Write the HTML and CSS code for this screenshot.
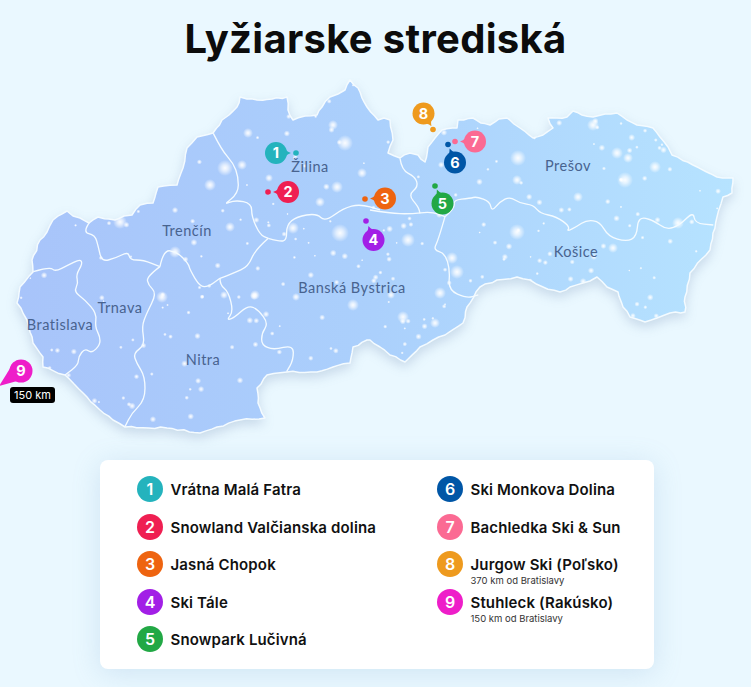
FILE: index.html
```html
<!DOCTYPE html>
<html lang="sk">
<head>
    <meta charset="UTF-8">
    <meta name="viewport" content="width=device-width, initial-scale=1.0">
    <title>Lyžiarske strediská</title>
    <link rel="stylesheet" href="styles.css">
</head>
<body>
    <h1 class="title">Lyžiarske strediská</h1>

    <svg class="map" viewBox="0 78 751 382" width="751" height="382">
        <defs>
            <linearGradient id="land" x1="0" x2="1" y1="0" y2="0">
                <stop offset="0" stop-color="#a8c4fa"/>
                <stop offset="0.5" stop-color="#abd0fc"/>
                <stop offset="1" stop-color="#b6e3ff"/>
            </linearGradient>
            <radialGradient id="speck">
                <stop offset="0" stop-color="#fff" stop-opacity="0.95"/>
                <stop offset="0.4" stop-color="#fff" stop-opacity="0.65"/>
                <stop offset="1" stop-color="#fff" stop-opacity="0"/>
            </radialGradient>
            <path id="outline" d="M17 303 L20 287 L33 272 L32 260 L40 240 L47 232 L53 220 L67 211 L73 216 L80 218 L89 223 L98 217 L115 220 L124 216 L132 215 L140 205 L153 203 L158 187 L177 185 L183 168 L187 148 L197 137 L213 133 L222 120 L229 115 L237 107 L240 97 L247 99 L257 100 L272 99 L287 97 L288 110 L293 120 L305 116 L317 115 L322 107 L330 97 L338 94 L345 90 L350 80 L354 85 L358 88 L362 98 L367 107 L378 120 L384 118 L390 120 L393 140 L388 153 L400 158 L410 153 L418 155 L425 162 L428 147 L435 138 L442 130 L457 128 L458 120 L473 118 L481 123 L490 125 L499 119 L507 118 L514 124 L520 128 L533 138 L543 135 L553 128 L548 118 L557 118 L567 117 L573 111 L582 115 L593 117 L605 114 L617 113 L627 120 L637 125 L653 128 L660 137 L668 147 L672 155 L693 165 L717 177 L733 178 L732 193 L723 197 L717 217 L713 233 L710 250 L690 273 L685 297 L685 312 L670 313 L657 318 L645 322 L630 317 L623 307 L618 292 L607 287 L597 277 L590 281 L583 283 L570 287 L560 292 L543 287 L530 280 L517 277 L497 280 L480 287 L467 307 L463 323 L445 335 L433 340 L420 347 L405 362 L390 355 L380 347 L370 340 L367 340 L353 347 L350 363 L333 367 L317 372 L287 372 L267 375 L257 388 L258 403 L265 418 L240 420 L217 427 L200 433 L167 428 L125 427 L113 420 L100 410 L87 397 L65 375 L43 367 L43 357 L33 343 L27 320 Z"/>
            <clipPath id="land-clip"><use href="#outline"/></clipPath>
            <path id="tail" d="M5 -9 Q9 -2 15 0 Q9 2 5 9 Z"/>
        </defs>

        <use href="#outline" class="land"/>
        <g id="specks" clip-path="url(#land-clip)"></g>
        <use href="#outline" class="edge"/>

        <!-- regions, west part traced at 3x -->
        <g class="border" transform="translate(0 70) scale(0.3333)">
            <path d="M100 605 L150 590 L165 605 L205 585 L240 568 L248 580 L228 615 L235 640 L222 665 L255 690 L290 730 L285 770 L300 800 L300 825 L275 850 L255 835 L235 860 L235 885 L195 915"/>
            <path d="M268 458 L248 487 L285 495 L295 530 L305 575 L345 565 L385 545 L390 570 L430 570 L480 590"/>
            <path d="M480 590 L440 620 L445 645 L470 670 L440 730 L425 770 L435 825 L400 850 L410 880 L435 920 L435 990 L395 1030 L375 1070"/>
            <path d="M480 590 L490 540 L530 545 L565 580 L570 600 L600 650 L625 650 L660 625"/>
            <path d="M640 190 L665 240 L700 280 L715 320 L715 370 L670 405 L705 390 L755 400 L755 440 L780 495 L805 505"/>
            <path d="M805 505 L765 540 L745 590 L700 610 L660 625"/>
            <path d="M660 625 L660 645 L685 665 L700 725 L680 750 L700 745 L745 705 L775 720 L805 760 L785 790 L785 825 L820 840 L880 825 L880 870 L860 905"/>
            <path d="M805 505 L840 515 L860 510 L860 465 L890 440 L950 430 L975 455 L1030 415 L1080 402 L1140 420"/>
        </g>
        <g class="border" transform="translate(370 70) scale(0.3333)">
            <path d="M0 420 L60 430 L120 432 L185 425 L225 440"/>
            <path d="M90 265 L95 300 L135 320 L145 350 L115 375 L145 410 L150 430"/>
            <path d="M225 440 L205 510 L190 540 L225 550 L240 600 L235 660 L290 685 L325 675"/>
            <path d="M225 440 L255 415 L250 390 L300 385 L320 380 L360 395 L365 425 L390 395 L420 380 L450 400 L490 405 L510 430 L560 440 L600 470 L590 485 L620 470 L650 450 L690 455 L715 500 L770 515 L800 500 L805 440 L850 450 L890 480 L930 465 L970 425 L975 460 L1030 465"/>
        </g>

        <g class="labels">
            <text x="310" y="172">Žilina</text>
            <text x="187" y="236">Trenčín</text>
            <text x="60" y="330">Bratislava</text>
            <text x="120" y="313">Trnava</text>
            <text x="203" y="365">Nitra</text>
            <text x="352" y="293">Banská Bystrica</text>
            <text x="568" y="171">Prešov</text>
            <text x="576" y="257">Košice</text>
        </g>

        <g class="pin pin-1">
            <circle cx="296" cy="153" r="2.8"/>
            <use href="#tail" transform="translate(276 153)"/>
            <circle cx="276" cy="153" r="11"/>
            <text x="276" y="158">1</text>
        </g>
        <g class="pin pin-2">
            <circle cx="268" cy="192" r="2.8"/>
            <use href="#tail" transform="translate(288 192) rotate(180)"/>
            <circle cx="288" cy="192" r="11"/>
            <text x="288" y="197">2</text>
        </g>
        <g class="pin pin-3">
            <circle cx="365" cy="199" r="2.8"/>
            <use href="#tail" transform="translate(385 198.5) rotate(180)"/>
            <circle cx="385" cy="198.5" r="11"/>
            <text x="385" y="203.5">3</text>
        </g>
        <g class="pin pin-4">
            <circle cx="366" cy="221" r="2.8"/>
            <use href="#tail" transform="translate(373.5 240) rotate(-110)"/>
            <circle cx="373.5" cy="240" r="11"/>
            <text x="373.5" y="245">4</text>
        </g>
        <g class="pin pin-5">
            <circle cx="435" cy="186" r="2.8"/>
            <use href="#tail" transform="translate(442.5 203.5) rotate(-112)"/>
            <circle cx="442.5" cy="203.5" r="11"/>
            <text x="442.5" y="208.5">5</text>
        </g>
        <g class="pin pin-6">
            <circle cx="448" cy="144.5" r="2.8"/>
            <use href="#tail" transform="translate(455 162.5) rotate(-111)"/>
            <circle cx="455" cy="162.5" r="11"/>
            <text x="455" y="167.5">6</text>
        </g>
        <g class="pin pin-7">
            <circle cx="455" cy="141.5" r="2.8"/>
            <use href="#tail" transform="translate(475 141.5) rotate(180)"/>
            <circle cx="475" cy="141.5" r="11"/>
            <text x="475" y="146.5">7</text>
        </g>
        <g class="pin pin-8">
            <circle cx="433" cy="129.5" r="2.8"/>
            <use href="#tail" transform="translate(423.5 113.5) rotate(58)"/>
            <circle cx="423.5" cy="113.5" r="11"/>
            <text x="423.5" y="118.5">8</text>
        </g>
        <g class="pin pin-9">
            <path d="M-1 386 L14 362 L28 378 Z"/>
            <circle cx="21" cy="371" r="11.5"/>
            <text x="21" y="376">9</text>
        </g>

        <rect class="tag" x="10" y="387" width="45" height="16" rx="3"/>
        <text class="tag-text" x="32.5" y="399">150 km</text>
    </svg>

    <section class="legend">
        <div class="place"><span class="num pin-1">1</span><div><div class="name">Vrátna Malá Fatra</div></div></div>
        <div class="place"><span class="num pin-2">2</span><div><div class="name">Snowland Valčianska dolina</div></div></div>
        <div class="place"><span class="num pin-3">3</span><div><div class="name">Jasná Chopok</div></div></div>
        <div class="place"><span class="num pin-4">4</span><div><div class="name">Ski Tále</div></div></div>
        <div class="place"><span class="num pin-5">5</span><div><div class="name">Snowpark Lučivná</div></div></div>
        <div class="place"><span class="num pin-6">6</span><div><div class="name">Ski Monkova Dolina</div></div></div>
        <div class="place"><span class="num pin-7">7</span><div><div class="name">Bachledka Ski &amp; Sun</div></div></div>
        <div class="place"><span class="num pin-8">8</span><div><div class="name">Jurgow Ski (Poľsko)</div><div class="note">370 km od Bratislavy</div></div></div>
        <div class="place"><span class="num pin-9">9</span><div><div class="name">Stuhleck (Rakúsko)</div><div class="note">150 km od Bratislavy</div></div></div>
    </section>

    <script src="map.js"></script>
</body>
</html>
```
FILE: styles.css
```css
body {
    margin: 0;
    height: 687px;
    overflow: hidden;
    background-color: #eaf8ff;
    font-family: "Inter", "Liberation Sans", sans-serif;
    color: #111;
}

.title {
    margin: 0;
    height: 78px;
    line-height: 78px;
    text-align: center;
    font-size: 40px;
    font-weight: 700;
    letter-spacing: 0.3px;
    color: #0c0c0c;
}

.map {
    display: block;
}

.land {
    fill: url(#land);
    filter: drop-shadow(0 5px 6px rgba(70, 100, 150, 0.22));
}

.edge {
    fill: none;
    stroke: #f4fbff;
    stroke-width: 1.5;
    stroke-linejoin: round;
}

.border path {
    fill: none;
    stroke: #f4fbff;
    stroke-width: 4;
    stroke-linejoin: round;
}

.labels text {
    font-family: "Lato", sans-serif;
    font-size: 14.5px;
    letter-spacing: 0.5px;
    text-anchor: middle;
    fill: #48638f;
}

.pin text {
    font-size: 14.5px;
    font-weight: 700;
    text-anchor: middle;
    fill: #fff;
}

.pin-1 { fill: #24b3bd; background-color: #24b3bd; }
.pin-2 { fill: #ef1f52; background-color: #ef1f52; }
.pin-3 { fill: #ee6410; background-color: #ee6410; }
.pin-4 { fill: #a21fe6; background-color: #a21fe6; }
.pin-5 { fill: #22a845; background-color: #22a845; }
.pin-6 { fill: #0056a6; background-color: #0056a6; }
.pin-7 { fill: #fb6a93; background-color: #fb6a93; }
.pin-8 { fill: #ee9a1e; background-color: #ee9a1e; }
.pin-9 { fill: #ee1ec9; background-color: #ee1ec9; }

.tag {
    fill: #000;
}

.tag-text {
    font-size: 11px;
    text-anchor: middle;
    fill: #fff;
}

.legend {
    box-sizing: border-box;
    width: 554px;
    height: 209px;
    margin-left: 100px;
    padding: 16px 0 0 37px;
    display: grid;
    grid-template-rows: repeat(5, 26px);
    grid-template-columns: 300px 1fr;
    grid-auto-flow: column;
    row-gap: 11.5px;
    background-color: #fff;
    border-radius: 8px;
    box-shadow: 0 4px 28px rgba(110, 160, 200, 0.22);
}

.place {
    display: flex;
    gap: 7.5px;
}

.num {
    flex: none;
    width: 26px;
    height: 26px;
    border-radius: 50%;
    text-align: center;
    line-height: 26px;
    font-size: 16px;
    font-weight: 600;
    color: #fff;
}

.name {
    line-height: 27px;
    font-size: 15px;
    font-weight: 600;
    letter-spacing: 0.15px;
}

.note {
    margin-top: -3px;
    line-height: 11px;
    font-size: 9.5px;
    color: #333;
}
```
FILE: map.js
```js
// bigger snow spots, read off the picture
const spots = [
    [225,168,8],[210,185,6],[120,222,7],[175,252,6],[345,143,8],[340,233,9],[293,228,6],[248,133,5],
    [242,165,5],[230,227,5],[337,187,6],[320,202,5],[362,173,5],[162,297,6],[255,295,5],[353,305,6],
    [518,158,8],[625,180,8],[593,125,6],[517,232,8],[457,272,7],[452,258,6],[408,240,7],[440,293,6],
    [403,317,6],[613,248,5],[678,223,6],[578,197,5],[655,167,6],[628,158,5],[435,323,5],[517,180,5],
    [617,153,6],[269,178,4],[333,125,5],[391,295,4],[254,296,4],[296,297,4],[224,295,4]
];

// the small ones just need to look scattered, so a fixed seed
let seed = 7;
function rnd() {
    seed = (seed * 16807) % 2147483647;
    return seed / 2147483647;
}

for (let i = 0; i < 420; i++) {
    spots.push([20 + rnd() * 715, 85 + rnd() * 345, 1.2 + rnd() * 2.3]);
}

const group = document.getElementById('specks');
spots.forEach(function (s) {
    const c = document.createElementNS('http://www.w3.org/2000/svg', 'circle');
    c.setAttribute('cx', s[0]);
    c.setAttribute('cy', s[1]);
    c.setAttribute('r', s[2]);
    c.setAttribute('fill', 'url(#speck)');
    group.appendChild(c);
});

function points(d) {
    return d.match(/-?[\d.]+ -?[\d.]+/g).map(function (p) {
        return p.split(' ').map(Number);
    });
}

// region borders were traced as straight pieces, round them off
document.querySelectorAll('.border path').forEach(function (path) {
    const pts = points(path.getAttribute('d'));
    let d = 'M' + pts[0].join(' ');
    for (let i = 1; i < pts.length - 1; i++) {
        const midX = (pts[i][0] + pts[i + 1][0]) / 2;
        const midY = (pts[i][1] + pts[i + 1][1]) / 2;
        d += ' Q' + pts[i].join(' ') + ' ' + midX + ' ' + midY;
    }
    d += ' L' + pts[pts.length - 1].join(' ');
    path.setAttribute('d', d);
});

// the coast is rough, break the long pieces up a little
const outline = document.getElementById('outline');
const coast = points(outline.getAttribute('d'));
let rough = 'M' + coast[0].join(' ');
coast.forEach(function (p, i) {
    const next = coast[(i + 1) % coast.length];
    const steps = Math.max(1, Math.round(Math.hypot(next[0] - p[0], next[1] - p[1]) / 6));
    for (let k = 1; k <= steps; k++) {
        const t = k / steps;
        const wobble = k === steps ? 0 : 1.6;
        const x = p[0] + (next[0] - p[0]) * t + (rnd() - 0.5) * wobble;
        const y = p[1] + (next[1] - p[1]) * t + (rnd() - 0.5) * wobble;
        rough += ' L' + x.toFixed(1) + ' ' + y.toFixed(1);
    }
});
outline.setAttribute('d', rough + ' Z');
```
